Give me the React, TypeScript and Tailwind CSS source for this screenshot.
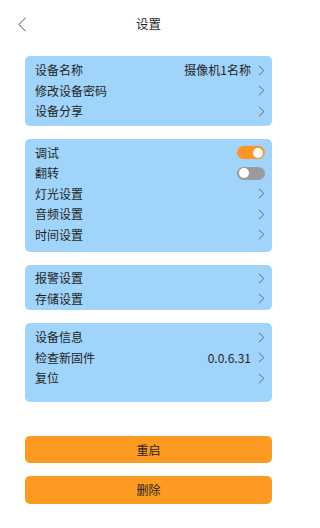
import { useState } from "react";

type Row = {
  label: string;
  value?: string;
  toggle?: boolean;
};

const groups: { rows: Row[]; pad: string }[] = [
  {
    rows: [
      { label: "设备名称", value: "摄像机1名称" },
      { label: "修改设备密码" },
      { label: "设备分享" },
    ],
    pad: "pt-[4px] pb-[4px]",
  },
  {
    rows: [
      { label: "调试", toggle: true },
      { label: "翻转", toggle: false },
      { label: "灯光设置" },
      { label: "音频设置" },
      { label: "时间设置" },
    ],
    pad: "pt-[4px] pb-[7px]",
  },
  {
    rows: [{ label: "报警设置" }, { label: "存储设置" }],
    pad: "pt-[3px] pb-[1px]",
  },
  {
    rows: [
      { label: "设备信息" },
      { label: "检查新固件", value: "0.0.6.31" },
      { label: "复位" },
    ],
    pad: "pt-[4px] pb-[13.5px]",
  },
];

const Chevron = () => (
  <svg width="7" height="11" viewBox="0 0 7 11" fill="none" className="shrink-0">
    <path d="M1 0.8L5.8 5.5L1 10.2" stroke="#5e5e5e" strokeWidth="0.9" />
  </svg>
);

const Switch = ({ initial }: { initial: boolean }) => {
  const [on, setOn] = useState(initial);
  return (
    <button
      onClick={() => setOn(!on)}
      className={`w-[28px] h-[13px] rounded-full flex items-center px-[2px] ${on ? "bg-[#fd9426] justify-end" : "bg-[#9b9b9b] justify-start"}`}
    >
      <span className="w-[10px] h-[10px] rounded-full bg-white" />
    </button>
  );
};

const App = () => {
  return (
    <div
      className="w-[297px] h-[528px] bg-white flex flex-col text-[#1f1f1f]"
      style={{ fontFamily: '"Noto Sans CJK SC", "Noto Sans", sans-serif' }}
    >
      <div className="relative h-12 flex items-center justify-center">
        <svg width="9" height="15" viewBox="0 0 9 15" fill="none" className="absolute left-[18px] top-[17px]">
          <path d="M7.5 0.8L1 7.5L7.5 14.2" stroke="#333" strokeWidth="0.9" />
        </svg>
        <span className="text-[12.5px]">设置</span>
      </div>

      <div className="mt-2 px-[25px] flex flex-col gap-[13px]">
        {groups.map((group, gi) => (
          <div
            key={gi}
            className={`bg-[#a0d4fa] rounded-[5px] pl-[10px] pr-[7px] flex flex-col ${group.pad}`}
          >
            {group.rows.map((row) => (
              <div key={row.label} className="h-[20.5px] flex items-center justify-between">
                <span className="text-[12px] leading-none">{row.label}</span>
                <div className="flex items-center gap-[7px]">
                  {row.value && <span className="text-[12px] leading-none">{row.value}</span>}
                  {row.toggle === undefined ? <Chevron /> : <Switch initial={row.toggle} />}
                </div>
              </div>
            ))}
          </div>
        ))}
      </div>

      <div className="mt-[34px] px-[25px] flex flex-col gap-[13px]">
        <button className="h-[27px] rounded-[5px] bg-[#fd9a22] text-[12px]">重启</button>
        <button className="h-[28px] rounded-[5px] bg-[#fd9a22] text-[12px]">删除</button>
      </div>
    </div>
  );
};

export default App;
